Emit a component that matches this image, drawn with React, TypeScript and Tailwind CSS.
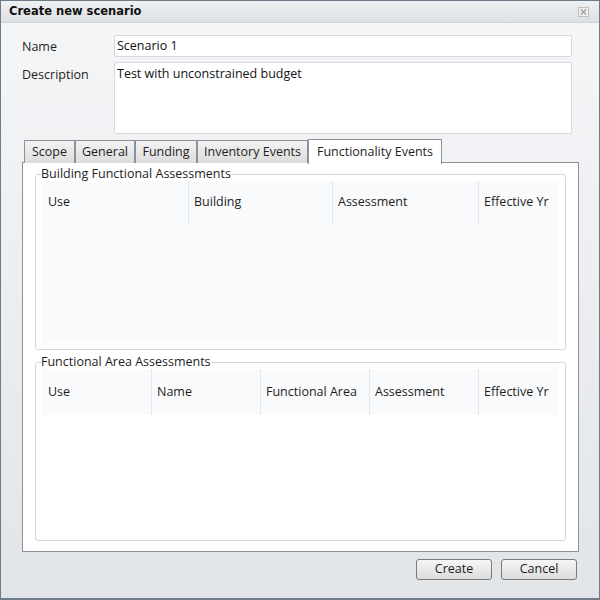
import React from "react";

const font = { fontFamily: '"Open Sans", "Noto Sans", sans-serif' };

function Group({
  title,
  cols,
  headerH,
  className,
}: {
  title: string;
  cols: { label: string; w: number }[];
  headerH: string;
  className: string;
}) {
  return (
    <fieldset className={`rounded-[3px] border border-[#d3d7dc] px-[7px] pb-[6px] pt-0 flex flex-col min-h-0 ${className}`}>
      <legend className="-ml-[2px] px-0 text-[12.5px] leading-[14px] text-[#1e1e1e]">{title}</legend>
      <div className="flex-1 bg-[#fafafa] flex flex-col">
        <div className={`flex ${headerH} bg-[#f9fafb]`}>
          {cols.map((c, i) => (
            <div
              key={c.label}
              className={`flex items-center pl-[5px] text-[12.5px] text-[#1e1e1e] ${i > 0 ? "border-l border-[#e2e8ef]" : ""}`}
              style={{ width: c.w }}
            >
              {c.label}
            </div>
          ))}
        </div>
      </div>
    </fieldset>
  );
}

export default function App() {
  const tabs = [
    { label: "Scope", w: 51 },
    { label: "General", w: 60 },
    { label: "Funding", w: 62 },
    { label: "Inventory Events", w: 111 },
  ];
  return (
    <div className="w-[600px] h-[600px] border border-[#6e7b88] border-b-2 flex flex-col bg-gradient-to-b from-[#f5f6f8] to-[#e2e5e8]" style={font}>
      {/* Title bar */}
      <div className="h-[22px] flex items-center justify-between pl-[8px] pr-[10px] bg-gradient-to-b from-[#eef0f2] to-[#dde0e3] border-b border-[#cfd3d7]">
        <span className="text-[11.5px] font-bold text-[#111]" style={{ fontFamily: '"DejaVu Sans", sans-serif' }}>
          Create new scenario
        </span>
        <svg width="11" height="10" viewBox="0 0 11 10" className="mt-[1px]">
          <rect x="0.5" y="0.5" width="10" height="9" fill="#eeeeee" stroke="#c0c0c0" />
          <path d="M3 2.5 L8 7.5 M8 2.5 L3 7.5" stroke="#a0a0a0" strokeWidth="1.4" />
        </svg>
      </div>

      {/* Form fields */}
      <div className="pl-[21px] pr-[27px] pt-[12px] flex flex-col gap-[5px]">
        <div className="flex items-center">
          <div className="w-[92px] text-[12.5px] text-[#1e1e1e] pt-[3px]">Name</div>
          <div className="flex-1 h-[22px] bg-white border border-[#d6d9dd] rounded-[2px] px-[2px] flex items-center text-[12.5px] text-[#111]">
            Scenario 1
          </div>
        </div>
        <div className="flex items-start">
          <div className="w-[92px] text-[12.5px] text-[#1e1e1e] pt-[4px]">Description</div>
          <div className="flex-1 h-[72px] bg-white border border-[#d6d9dd] rounded-[2px] px-[2px] pt-[2px] text-[12.5px] text-[#111]">
            Test with unconstrained budget
          </div>
        </div>
      </div>

      {/* Tabs */}
      <div className="pl-[21px] pr-[20px] mt-[5px] flex flex-col">
        <div className="flex items-end h-[24px] pl-[2px] relative z-10">
          {tabs.map((t) => (
            <div
              key={t.label}
              className="h-[23px] border border-[#8d9096] border-b-0 bg-gradient-to-b from-[#f3f3f3] to-[#dcdcdc] flex items-center justify-center text-[12.5px] text-[#1e1e1e]"
              style={{ width: t.w }}
            >
              {t.label}
            </div>
          ))}
          <div className="h-[25px] w-[134px] -mb-[1px] border border-[#8d9096] border-b-0 bg-white flex items-center justify-center text-[12.5px] text-[#1e1e1e]">
            Functionality Events
          </div>
        </div>
        <div className="h-[390px] -mt-[1px] border border-[#8d9096] bg-white px-[12px] pt-[4px] pb-[10px] flex flex-col gap-[5px]">
          <Group
            className="h-[183px] shrink-0"
            title="Building Functional Assessments"
            headerH="h-[43px]"
            cols={[
              { label: "Use", w: 145 },
              { label: "Building", w: 144 },
              { label: "Assessment", w: 146 },
              { label: "Effective Yr", w: 79 },
            ]}
          />
          <Group
            className="flex-1"
            title="Functional Area Assessments"
            headerH="h-[46px]"
            cols={[
              { label: "Use", w: 108 },
              { label: "Name", w: 109 },
              { label: "Functional Area", w: 109 },
              { label: "Assessment", w: 109 },
              { label: "Effective Yr", w: 79 },
            ]}
          />
        </div>
      </div>

      {/* Buttons */}
      <div className="flex justify-end gap-[9px] pr-[22px] mt-[7px]">
        {["Create", "Cancel"].map((b) => (
          <div
            key={b}
            className="w-[76px] h-[21px] rounded-[3px] border border-[#7a7a7a] bg-gradient-to-b from-[#f6f6f6] to-[#dcdcdc] flex items-center justify-center text-[12.5px] text-[#1e1e1e]"
          >
            {b}
          </div>
        ))}
      </div>
    </div>
  );
}
